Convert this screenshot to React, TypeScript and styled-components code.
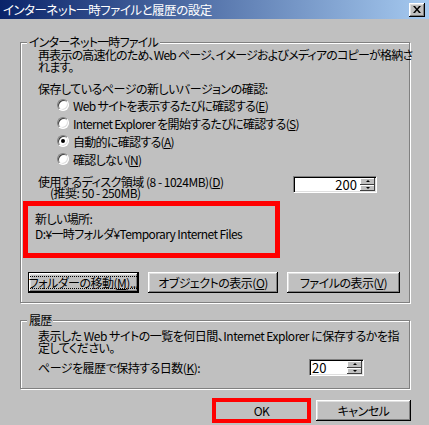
import React from "react";
import styled, { createGlobalStyle } from "styled-components";

const GlobalStyle = createGlobalStyle`
  html, body {
    margin: 0;
    padding: 0;
    background: #c0c0c0;
  }
  body {
    font-family: "Noto Sans CJK JP", "Liberation Sans", sans-serif;
    font-size: 12px;
    letter-spacing: -0.5px;
    font-feature-settings: "palt";
    color: #000;
  }
`;

const Window = styled.div`
  width: 429px;
  height: 425px;
  display: flex;
  flex-direction: column;
  background: #c0c0c0;
  overflow: hidden;
`;

const TitleBar = styled.div`
  height: 19px;
  display: flex;
  align-items: center;
  justify-content: space-between;
  padding: 0 4px 0 3px;
  background: linear-gradient(to right, #0a246a, #a6caf0);
  color: #fff;
  font-size: 12.5px;
  line-height: 19px;
  white-space: nowrap;
`;

const CloseButton = styled.div`
  width: 16px;
  height: 14px;
  box-sizing: border-box;
  background: #c0c0c0;
  box-shadow: inset -1px -1px #000, inset 1px 1px #fff, inset -2px -2px #808080,
    inset 2px 2px #dfdfdf;
  display: flex;
  align-items: center;
  justify-content: center;
`;

const Body = styled.div`
  padding: 16px 0 0 20px;
  display: flex;
  flex-direction: column;
`;

const Group = styled.fieldset<{ $top?: number }>`
  margin: ${(p) => p.$top ?? 0}px 0 0 0;
  padding: 0;
  width: 390px;
  box-sizing: border-box;
  min-width: 0;
  border: 1px solid #808080;
  box-shadow: inset 1px 1px 0 #fff, 1px 1px 0 #fff;
`;

const Legend = styled.legend`
  margin-left: 6px;
  padding: 0 2px;
  line-height: 14px;
  letter-spacing: -0.8px;
  background: #c0c0c0;
`;

const Content = styled.div<{ $top: number; $bottom: number }>`
  display: flex;
  flex-direction: column;
  padding: ${(p) => p.$top}px 0 ${(p) => p.$bottom}px 0;
`;

const Text = styled.p<{ $top?: number; $tight?: boolean }>`
  margin: ${(p) => p.$top ?? 0}px 0 0 17px;
  line-height: 12px;
  white-space: nowrap;
  letter-spacing: ${(p) => (p.$tight ? "-0.8px" : "-0.5px")};
`;

const RadioList = styled.div`
  margin: 1px 0 0 36px;
  display: flex;
  flex-direction: column;
`;

const RadioRow = styled.label`
  height: 18px;
  display: flex;
  align-items: center;
  gap: 4px;
  white-space: nowrap;
  letter-spacing: -0.7px;
`;

const RadioCircle = styled.span<{ $checked?: boolean }>`
  width: 12px;
  height: 12px;
  box-sizing: border-box;
  border-radius: 50%;
  background: #fff;
  border: 1px solid;
  border-color: #808080 #fff #fff #808080;
  box-shadow: inset 1px 1px 0 #404040, inset -1px -1px 0 #dfdfdf;
  display: flex;
  align-items: center;
  justify-content: center;

  &::after {
    content: "";
    width: 4px;
    height: 4px;
    border-radius: 50%;
    background: ${(p) => (p.$checked ? "#000" : "transparent")};
  }
`;

const Key = styled.span`
  text-decoration: underline;
`;

const DiskRow = styled.div`
  margin: 8px 0 0 17px;
  height: 22px;
  display: flex;
  justify-content: space-between;
  padding-right: 32px;
`;

const DiskText = styled.div`
  line-height: 11px;
  white-space: nowrap;
`;

const SubLine = styled.div`
  padding-left: 12px;
`;

const Spin = styled.div<{ $width: number }>`
  width: ${(p) => p.$width}px;
  height: 17px;
  box-sizing: border-box;
  display: flex;
  background: #fff;
  border: 1px solid;
  border-color: #808080 #fff #fff #808080;
  box-shadow: inset 1px 1px 0 #000, inset -1px -1px 0 #dfdfdf;
  padding: 1px;
`;

const SpinValue = styled.div<{ $align: "left" | "right" }>`
  flex: 1;
  text-align: ${(p) => p.$align};
  line-height: 13px;
  padding: 0 3px 0 1px;
  font-size: 13px;
  letter-spacing: 0;
`;

const SpinButtons = styled.div`
  width: 15px;
  display: flex;
  flex-direction: column;
`;

const SpinButton = styled.div<{ $down?: boolean }>`
  flex: 1;
  background: #c0c0c0;
  box-shadow: inset -1px -1px #404040, inset 1px 1px #fff;
  display: flex;
  align-items: center;
  justify-content: center;

  &::after {
    content: "";
    border-left: 2px solid transparent;
    border-right: 2px solid transparent;
    ${(p) =>
      p.$down ? "border-top: 2px solid #000;" : "border-bottom: 2px solid #000;"}
  }
`;

const RedBox = styled.div`
  margin: 3px 0 0 2px;
  width: 257px;
  height: 57px;
  box-sizing: border-box;
  border: 5px solid #ff0000;
  padding: 5px 0 0 7px;
  line-height: 15px;
  white-space: nowrap;
  letter-spacing: -0.6px;
`;

const ButtonRow = styled.div`
  margin: 14px 0 0 7px;
  display: flex;
  gap: 9px;
`;

const Button = styled.div<{ $width: number; $default?: boolean; $marked?: boolean }>`
  width: ${(p) => p.$width}px;
  height: 21px;
  box-sizing: border-box;
  display: flex;
  align-items: center;
  justify-content: center;
  white-space: nowrap;
  background: #c0c0c0;
  border: ${(p) => (p.$default ? "1px solid #000" : "none")};
  box-shadow: inset -1px -1px #000, inset 1px 1px #fff, inset -2px -2px #808080,
    inset 2px 2px #dfdfdf;
  outline: ${(p) => (p.$marked ? "4px solid #ff0000" : "none")};
  outline-offset: -2px;
`;

const FocusRing = styled.span`
  align-self: stretch;
  flex: 1;
  margin: 3px;
  border: 1px dotted #000;
  display: flex;
  align-items: center;
  justify-content: center;
`;

const HistoryRow = styled.div`
  margin: 5px 0 0 17px;
  height: 17px;
  display: flex;
  align-items: center;
  justify-content: space-between;
  padding-right: 45px;
  white-space: nowrap;
`;

const DialogButtons = styled.div`
  margin-top: 11px;
  display: flex;
  justify-content: flex-end;
  gap: 7px;
  padding-right: 18px;
`;

const SpinBox: React.FC<{ width: number; value: string; align: "left" | "right" }> = ({
  width,
  value,
  align,
}) => (
  <Spin $width={width}>
    <SpinValue $align={align}>{value}</SpinValue>
    <SpinButtons>
      <SpinButton />
      <SpinButton $down />
    </SpinButtons>
  </Spin>
);

const Radio: React.FC<{ checked?: boolean; children: React.ReactNode }> = ({
  checked,
  children,
}) => (
  <RadioRow>
    <RadioCircle $checked={checked} />
    <span>{children}</span>
  </RadioRow>
);

export default function App() {
  return (
    <>
      <GlobalStyle />
      <Window>
        <TitleBar>
          <span>インターネット一時ファイルと履歴の設定</span>
          <CloseButton>
            <svg width="8" height="7" viewBox="0 0 8 7">
              <path d="M0 0h2l2 2.5L6 0h2L5 3.5 8 7H6L4 4.5 2 7H0l3-3.5z" fill="#000" />
            </svg>
          </CloseButton>
        </TitleBar>
        <Body>
          <Group>
            <Legend>インターネット一時ファイル</Legend>
            <Content $top={0} $bottom={9}>
              <Text $tight>
                再表示の高速化のため、Web ページ、イメージおよびメディアのコピーが格納さ
                <br />
                れます。
              </Text>
              <Text $top={10}>保存しているページの新しいバージョンの確認:</Text>
              <RadioList>
                <Radio>
                  Web サイトを表示するたびに確認する(<Key>E</Key>)
                </Radio>
                <Radio>
                  Internet Explorer を開始するたびに確認する(<Key>S</Key>)
                </Radio>
                <Radio checked>
                  自動的に確認する(<Key>A</Key>)
                </Radio>
                <Radio>
                  確認しない(<Key>N</Key>)
                </Radio>
              </RadioList>
              <DiskRow>
                <DiskText>
                  <div>
                    使用するディスク領域 (8 - 1024MB)(<Key>D</Key>)
                  </div>
                  <SubLine>(推奨: 50 - 250MB)</SubLine>
                </DiskText>
                <SpinBox width={84} value="200" align="right" />
              </DiskRow>
              <RedBox>
                <div>新しい場所:</div>
                <div>D:¥一時フォルダ¥Temporary Internet Files</div>
              </RedBox>
              <ButtonRow>
                <Button $width={111} $default>
                  <FocusRing>
                    フォルダーの移動(<Key>M</Key>)...
                  </FocusRing>
                </Button>
                <Button $width={130}>
                  オブジェクトの表示(<Key>O</Key>)
                </Button>
                <Button $width={113}>
                  ファイルの表示(<Key>V</Key>)
                </Button>
              </ButtonRow>
            </Content>
          </Group>
          <Group $top={10}>
            <Legend>履歴</Legend>
            <Content $top={3} $bottom={12}>
              <Text>
                表示した Web サイトの一覧を何日間、Internet Explorer に保存するかを指
                <br />
                定してください。
              </Text>
              <HistoryRow>
                <span>
                  ページを履歴で保持する日数(<Key>K</Key>):
                </span>
                <SpinBox width={55} value="20" align="left" />
              </HistoryRow>
            </Content>
          </Group>
          <DialogButtons>
            <Button $width={95} $marked>
              OK
            </Button>
            <Button $width={95}>キャンセル</Button>
          </DialogButtons>
        </Body>
      </Window>
    </>
  );
}
